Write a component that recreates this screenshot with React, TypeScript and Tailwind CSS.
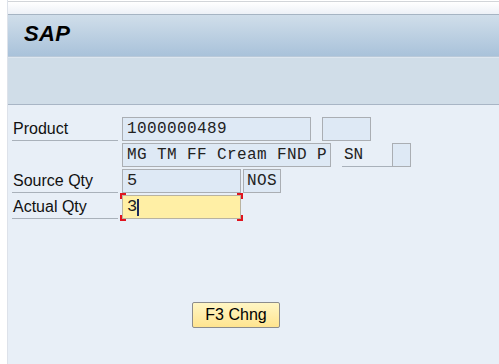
import React from "react";

const mono = { fontFamily: '"Liberation Mono", "Courier New", monospace' };
const sans = { fontFamily: '"Liberation Sans", Arial, sans-serif' };

const Field = (props: { w: string; text?: string; className?: string }) => (
  <div
    className={`${props.w} h-[24px] border border-[#aaaeb3] bg-[#dee9f5] pl-[4px] text-[16px] tracking-[0.4px] leading-[22px] text-[#222] ${props.className ?? ""}`}
    style={mono}
  >
    {props.text}
  </div>
);

const Label = (props: { text?: string }) => (
  <div className="w-[106px] h-[24px] border-b border-[#a9b1ba] pl-[1px] text-[16px] leading-[24px] text-[#111]">
    {props.text}
  </div>
);

const App = () => {
  return (
    <div className="w-[499px] h-[364px] flex overflow-hidden bg-white" style={sans}>
      <div className="w-[8px] h-full bg-white border-r border-[#dde2ea]" />
      <div className="flex-1 flex flex-col">
        <div className="h-[13px] mt-px border-t border-[#d2d5d9] bg-gradient-to-b from-white to-[#edf1f7]" />
        <div className="h-[42px] border-t border-[#a6b4c3] bg-gradient-to-b from-[#d0deea] to-[#a9c2da] pl-[16px] pb-[5px] flex items-center">
          <span className="text-[22px] font-black italic text-black tracking-[0.3px]">SAP</span>
        </div>
        <div className="h-[2px] bg-[#dde6ef] border-t border-[#b9c9d9]" />
        <div className="h-[47px] bg-[#d0dde8] border-b border-[#a8b5c5]" />
        <div className="flex-1 bg-[#e8eff7] pt-[12px] pl-[4px]">
          <div className="flex flex-col gap-[2px]">
            <div className="flex items-center">
              <Label text="Product" />
              <Field w="w-[189px]" text="1000000489" className="ml-[4px]" />
              <Field w="w-[49px]" className="ml-[11px]" />
            </div>
            <div className="flex items-center">
              <div className="w-[110px]" />
              <Field w="w-[209px]" text="MG TM FF Cream FND P" />
              <div
                className="ml-[11px] w-[50px] h-[24px] border-b border-[#a9b1ba] pl-[2px] text-[16px] leading-[24px] text-[#222]"
                style={mono}
              >
                SN
              </div>
              <Field w="w-[19px]" />
            </div>
            <div className="flex items-center">
              <Label text="Source Qty" />
              <Field w="w-[119px]" text="5" className="ml-[4px] !text-[17px]" />
              <Field w="w-[38px]" text="NOS" className="ml-[2px] !pl-[3px]" />
            </div>
            <div className="flex items-center">
              <Label text="Actual Qty" />
              <div className="relative ml-[4px]">
                <div className="w-[119px] h-[24px] border border-[#b9b3a0] bg-[#ffefa5] pl-[4px] flex items-center text-[17px] text-[#222]" style={mono}>
                  <span className="leading-[22px]">3</span>
                  <span className="w-[2px] h-[17px] bg-[#1c2a5c]" />
                </div>
                <span className="absolute -left-[2px] -top-[2px] w-[6px] h-[6px] border-l-2 border-t-2 border-[#e0141e]" />
                <span className="absolute -right-[2px] -top-[2px] w-[6px] h-[6px] border-r-2 border-t-2 border-[#e0141e]" />
                <span className="absolute -left-[2px] -bottom-[2px] w-[6px] h-[6px] border-l-2 border-b-2 border-[#e0141e]" />
                <span className="absolute -right-[2px] -bottom-[2px] w-[6px] h-[6px] border-r-2 border-b-2 border-[#e0141e]" />
              </div>
            </div>
          </div>
          <div className="mt-[83px] ml-[180px]">
            <button className="w-[88px] h-[26px] rounded-[2px] border border-[#8c8c8c] bg-gradient-to-b from-[#fff6c4] to-[#ffe48f] text-[16px] text-black leading-[24px]">
              F3 Chng
            </button>
          </div>
        </div>
      </div>
    </div>
  );
};

export default App;
